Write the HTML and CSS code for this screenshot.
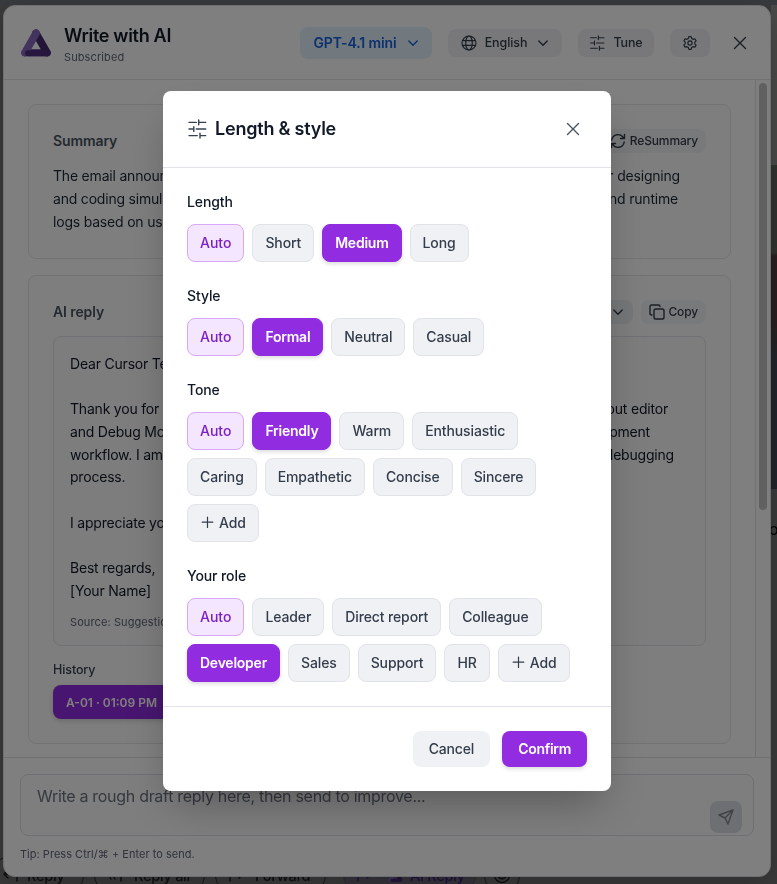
FILE: index.html
```html
<!DOCTYPE html>
<html lang="en">

<head>
    <meta charset="UTF-8">
    <meta name="viewport" content="width=device-width, initial-scale=1.0">
    <title>Write with AI</title>
    <link rel="stylesheet" href="styles.css">
</head>

<body>
    <svg width="0" height="0" class="sprite">
        <symbol id="icon-tune" viewBox="0 0 20 20">
            <path d="M2 3.400h7.300M11.700 3.400h7M11.700 1v4.800M2 10h4.800M9.300 10h9.400M6.800 7.600v4.800M2 16.600h8.300M13 16.600h5.700M13 14.200v4.800" />
        </symbol>
        <symbol id="icon-close" viewBox="0 0 14 14">
            <path d="M1.500 1.500l11 11M12.500 1.500l-11 11" />
        </symbol>
        <symbol id="icon-down" viewBox="0 0 12 12">
            <path d="M1.800 4L6 8.200 10.200 4" />
        </symbol>
        <symbol id="icon-plus" viewBox="0 0 14 14">
            <path d="M7.500 2v10.500M2.200 7.200h10.600" />
        </symbol>
        <symbol id="icon-logo" viewBox="0 0 30 28">
            <path d="M4 23.800h22" stroke="#54308c" stroke-width="7" />
            <path d="M15 4.300l11 19.300" stroke="#452a6c" stroke-width="7.600" />
            <path d="M15 4.300L4 23.600" stroke="#8468bc" stroke-width="7.600" />
            <path d="M7 24.300h19" stroke="#4c2e7c" stroke-width="6" />
        </symbol>
    </svg>

    <!-- mail page behind -->
    <div class="mail">
        <div class="mail-side">
            <div class="side-top"></div>
            <div class="side-photo"></div>
            <div class="side-text">o</div>
        </div>
        <div class="mail-actions">
            <div class="pill reply"><svg class="ic" width="16" height="14" viewBox="0 0 16 14"><path d="M5 2L1 6l4 4M1 6h10q3 0 3 4v3" /></svg>Reply</div>
            <div class="pill reply-all"><svg class="ic" width="16" height="14" viewBox="0 0 16 14"><path d="M4 2L1 6l3 5M8 2L5 6l3 5M5 6h6q3 0 3 4v3" /></svg>Reply all</div>
            <div class="pill forward"><svg class="ic" width="16" height="14" viewBox="0 0 16 14"><path d="M11 2l4 4-4 4M15 6H5Q2 6 2 10v3" /></svg>Forward</div>
            <div class="pill ai"><svg class="ic" width="16" height="14" viewBox="0 0 16 14"><path d="M11 2l4 4-4 4M15 6H5Q2 6 2 10v3" /></svg><svg class="logo" width="15" height="13"><use href="#icon-logo" /></svg>AI Reply</div>
            <div class="pill smile"><svg class="ic" width="18" height="18" viewBox="0 0 18 18"><circle cx="9" cy="9" r="7.500" /><path d="M5 10.500q4 5 8 0zM6 6.500v1M12 6.500v1" /></svg></div>
        </div>
    </div>

    <div class="panel">
        <div class="panel-header">
            <svg class="logo" width="30" height="28"><use href="#icon-logo" /></svg>
            <div class="panel-title">
                <h1>Write with AI</h1>
                <p>Subscribed</p>
            </div>
            <div class="toolbar">
                <button class="tool model">GPT-4.1 mini <svg class="ic" width="12" height="12"><use href="#icon-down" /></svg></button>
                <button class="tool lang">
                    <svg class="ic thin" width="16" height="16" viewBox="0 0 16 16"><circle cx="8" cy="8" r="7" /><ellipse cx="8" cy="8" rx="3.300" ry="7" /><path d="M1.500 5.700h13M1.500 10.300h13" /></svg>
                    English
                    <svg class="ic arrow" width="12" height="12"><use href="#icon-down" /></svg>
                </button>
                <button class="tool tune"><svg class="ic" width="16" height="16"><use href="#icon-tune" /></svg>Tune</button>
                <button class="tool gear">
                    <svg class="ic" width="16" height="16" viewBox="0 0 24 24"><circle cx="12" cy="12" r="3.200" /><path d="M9.600 5.200L10.300 2.500h3.400l.7 2.700 2.200 1.300 2.700-.8 1.900 3.100-2 1.900v2.600l2 1.900-1.900 3.100-2.700-.8-2.200 1.300-.7 2.700h-3.400l-.7-2.700-2.200-1.300-2.700.8-1.900-3.100 2-1.900v-2.600l-2-1.900 1.900-3.100 2.700.8z" /></svg>
                </button>
                <button class="close"><svg class="ic" width="14" height="14"><use href="#icon-close" /></svg></button>
            </div>
        </div>

        <div class="panel-body">
            <div class="content">
                <div class="card">
                    <div class="card-head">
                        <h2>Summary</h2>
                        <button class="small">
                            <svg class="ic" width="16" height="16" viewBox="0 0 16 16"><path d="M1.800 7A6.300 6.300 0 0 1 13.500 4.800M14.500 1.500v4h-4M14.200 9A6.300 6.300 0 0 1 2.500 11.200M1.500 14.500v-4h4" /></svg>
                            ReSummary
                        </button>
                    </div>
                    <div class="text">
                        <p class="s1"><span>The email announces</span><span>for designing</span></p>
                        <p class="s2"><span>and coding simulators</span><span>and runtime</span></p>
                        <p>logs based on user</p>
                    </div>
                </div>

                <div class="card">
                    <div class="card-head">
                        <h2>AI reply</h2>
                        <div class="head-buttons">
                            <button class="small translate">Translate <svg class="ic" width="12" height="12"><use href="#icon-down" /></svg></button>
                            <button class="small copy">
                                <svg class="ic" width="16" height="16" viewBox="0 0 16 16"><rect x="5" y="5" width="10" height="10" rx="1.800" /><path d="M3 11H2.500Q1 11 1 9.500v-7Q1 1 2.500 1h7Q11 1 11 2.500" /></svg>
                                Copy
                            </button>
                        </div>
                    </div>
                    <div class="reply-box">
                        <div class="text">
                            <p>Dear Cursor Team,</p>
                            <p></p>
                            <p class="r1"><span>Thank you for</span><span>layout editor</span></p>
                            <p class="r2"><span>and Debug Mode</span><span>development</span></p>
                            <p class="r3"><span>workflow. I am</span><span>debugging</span></p>
                            <p>process.</p>
                            <p></p>
                            <p>I appreciate your</p>
                            <p></p>
                            <p>Best regards,</p>
                            <p>[Your Name]</p>
                        </div>
                        <p class="source">Source: Suggestion</p>
                    </div>
                    <p class="history-label">History</p>
                    <button class="history">A-01 · 01:09 PM</button>
                </div>
            </div>
            <div class="scrollbar">
                <div class="thumb"></div>
            </div>
        </div>

        <div class="panel-footer">
            <div class="draft">
                <textarea placeholder="Write a rough draft reply here, then send to improve..."></textarea>
                <button class="send"><svg class="ic" width="16" height="16" viewBox="0 0 16 16"><path d="M15 1L1 6l6 3 3 6zM15 1L7 9" /></svg></button>
            </div>
            <p class="tip">Tip: Press Ctrl/⌘ + Enter to send.</p>
        </div>
    </div>

    <div class="overlay">
        <div class="modal">
            <div class="modal-header">
                <svg class="ic" width="20" height="20"><use href="#icon-tune" /></svg>
                <h2>Length &amp; style</h2>
                <button class="close"><svg class="ic" width="14" height="14"><use href="#icon-close" /></svg></button>
            </div>

            <div class="modal-body">
                <div class="group">
                    <h3>Length</h3>
                    <div class="chips">
                        <button class="chip auto">Auto</button>
                        <button class="chip">Short</button>
                        <button class="chip active">Medium</button>
                        <button class="chip">Long</button>
                    </div>
                </div>
                <div class="group">
                    <h3>Style</h3>
                    <div class="chips">
                        <button class="chip auto">Auto</button>
                        <button class="chip active">Formal</button>
                        <button class="chip">Neutral</button>
                        <button class="chip">Casual</button>
                    </div>
                </div>
                <div class="group">
                    <h3>Tone</h3>
                    <div class="chips">
                        <button class="chip auto">Auto</button>
                        <button class="chip active">Friendly</button>
                        <button class="chip">Warm</button>
                        <button class="chip">Enthusiastic</button>
                        <button class="chip">Caring</button>
                        <button class="chip">Empathetic</button>
                        <button class="chip">Concise</button>
                        <button class="chip">Sincere</button>
                        <button class="chip add"><svg class="ic" width="14" height="14"><use href="#icon-plus" /></svg>Add</button>
                    </div>
                </div>
                <div class="group">
                    <h3>Your role</h3>
                    <div class="chips">
                        <button class="chip auto">Auto</button>
                        <button class="chip">Leader</button>
                        <button class="chip">Direct report</button>
                        <button class="chip">Colleague</button>
                        <button class="chip active">Developer</button>
                        <button class="chip">Sales</button>
                        <button class="chip">Support</button>
                        <button class="chip">HR</button>
                        <button class="chip add"><svg class="ic" width="14" height="14"><use href="#icon-plus" /></svg>Add</button>
                    </div>
                </div>
            </div>

            <div class="modal-footer">
                <button class="cancel">Cancel</button>
                <button class="confirm">Confirm</button>
            </div>
        </div>
    </div>
</body>

</html>
```

FILE: styles.css
```css
* {
    box-sizing: border-box;
    margin: 0;
    padding: 0;
}

body {
    height: 884px;
    overflow: hidden;
    font-family: Inter, "Liberation Sans", "DejaVu Sans", sans-serif;
    font-size: 14px;
    color: #111827;
    background-color: #757575;
}

button,
textarea {
    font-family: inherit;
    border: none;
}

button {
    display: flex;
    align-items: center;
    justify-content: center;
    font-weight: 500;
    font-size: 14px;
    color: #333d4b;
    white-space: nowrap;
    cursor: pointer;
}

.sprite {
    position: absolute;
}

.ic {
    flex-shrink: 0;
    fill: none;
    stroke: currentColor;
    stroke-width: 1.4;
    stroke-linecap: round;
    stroke-linejoin: round;
}

.thin {
    stroke-width: 1.2;
}

.logo {
    flex-shrink: 0;
    fill: none;
    stroke-linecap: round;
}

/* mail page */
.mail {
    position: fixed;
    inset: 0;
    display: flex;
    flex-direction: column;
    justify-content: space-between;
    border-top: 5px solid #72747a;
}

.mail-side {
    width: 6px;
    margin-left: auto;
    flex: none;
    height: 680px;
    overflow: hidden;
}

.side-top {
    height: 160px;
    background-color: #93938f;
}

.side-photo {
    height: 324px;
    background: linear-gradient(#62665c 0 27%, #4c4240 28% 50%, #454a50 60% 100%);
}

.side-text {
    padding-top: 30px;
    margin-left: -2px;
    font-size: 16px;
    line-height: 20px;
    color: #000;
}

.mail-actions {
    display: flex;
    gap: 10px;
    height: 27px;
    margin-left: -10px;
}

.pill {
    flex: none;
    display: flex;
    align-items: center;
    height: 36px;
    padding-left: 12px;
    gap: 11px;
    border: 1px solid #303030;
    border-radius: 18px;
    font-size: 14.5px;
    font-weight: 500;
    letter-spacing: -0.25px;
    color: #1c1c1c;
}

.reply {
    width: 94px;
    gap: 8px;
}

.reply-all {
    width: 111px;
}

.forward {
    width: 111px;
}

.ai {
    width: 133px;
    gap: 7px;
    margin-left: 7px;
    color: #3d207a;
    border-color: #5c5273;
    background-color: #6d6878;
}

.ai .logo {
    margin-left: 9px;
}

.smile {
    width: 36px;
    padding-left: 8px;
    margin-left: -2px;
}

/* panel */
.panel {
    position: fixed;
    top: 5px;
    left: 3px;
    width: 768px;
    height: 872px;
    display: flex;
    flex-direction: column;
    overflow: hidden;
    background-color: #fff;
    border: 1px solid #dcdee4;
    border-radius: 12px;
    box-shadow: 0 10px 30px rgba(0, 0, 0, 0.2);
}

.panel-header {
    flex: none;
    display: flex;
    align-items: center;
    height: 74px;
    padding: 0 16px 0 17px;
    border-bottom: 1px solid #e1e3e7;
}

.panel-title {
    padding-top: 3px;
    margin-left: 13px;
}

.panel-title h1 {
    font-size: 18px;
    font-weight: 600;
    line-height: 24px;
    letter-spacing: -0.3px;
}

.panel-title p {
    margin-top: 1px;
    font-size: 11px;
    line-height: 16px;
    letter-spacing: 0.1px;
    color: #5f6775;
}

.toolbar {
    display: flex;
    align-items: center;
    gap: 16px;
    margin-left: auto;
}

.tool {
    height: 28px;
    border-radius: 8px;
    font-size: 12.5px;
    letter-spacing: -0.1px;
    background-color: #f0f1f4;
}

.model {
    width: 132px;
    height: 32px;
    gap: 10px;
    font-size: 14px;
    font-weight: 600;
    letter-spacing: -0.12px;
    color: #1662dc;
    background-color: #e3f1fd;
}

.lang {
    width: 114px;
    gap: 8px;
}

.lang .arrow {
    margin-left: 2px;
}

.tune {
    width: 76px;
    gap: 8px;
}

.gear {
    width: 40px;
}

.gear .ic {
    stroke-width: 1.7;
}

.close {
    width: 28px;
    height: 28px;
    background: none;
}

.panel-body {
    flex: 1;
    display: flex;
    min-height: 0;
}

.content {
    flex: 1;
    display: flex;
    flex-direction: column;
    gap: 16px;
    padding: 24px;
    overflow: hidden;
}

.scrollbar {
    width: 15px;
    padding: 3px 3px;
    border-left: 1px solid #e1e3e7;
    background-color: #fcfcfc;
}

.thumb {
    width: 8px;
    height: 427px;
    border-radius: 4px;
    background-color: #c1c1c1;
}

.card {
    flex: none;
    padding: 24px;
    background-color: #fcfcfd;
    border: 1px solid #e5e7eb;
    border-radius: 8px;
}

.card:first-child {
    height: 155px;
}

.card-head {
    display: flex;
    align-items: center;
    justify-content: space-between;
    height: 24px;
    margin-bottom: 12px;
}

.card-head h2 {
    padding-bottom: 1px;
    font-size: 14px;
    font-weight: 600;
    letter-spacing: -0.1px;
    color: #4b5563;
}

.head-buttons {
    display: flex;
    gap: 8px;
}

.small {
    height: 24px;
    padding: 0 8px 1px;
    gap: 4px;
    border-radius: 8px;
    font-size: 12px;
    letter-spacing: -0.15px;
    background-color: #f1f3f6;
}

.translate {
    gap: 8px;
    padding-right: 9px;
    background-color: #eceef2;
}

.copy {
    gap: 3px;
}

.text p {
    display: flex;
    justify-content: space-between;
    height: 22.75px;
    line-height: 22.75px;
    letter-spacing: -0.2px;
    color: #1f2937;
}

.text .s1 {
    width: 627px;
}

.text .s2 {
    width: 625px;
}

.text .r1 {
    width: 598px;
}

.text .r2 {
    width: 580px;
}

.text .r3 {
    width: 604px;
}

.reply-box {
    padding: 15.6px 16px 15px;
    background-color: #fafafb;
    border: 1px solid #e1e3e8;
    border-radius: 8px;
}

.reply-box .text p {
    color: #111827;
}

.source {
    margin-top: 11.4px;
    font-size: 11px;
    line-height: 16px;
    letter-spacing: 0.1px;
    color: #5f6775;
}

.history-label {
    margin: 16px 0 7px;
    font-size: 12.5px;
    font-weight: 500;
    line-height: 16px;
    letter-spacing: -0.1px;
    color: #374151;
}

.history {
    width: 140px;
    height: 34px;
    padding-left: 13px;
    justify-content: flex-start;
    border-radius: 8px;
    font-size: 12px;
    font-weight: 600;
    color: #fff;
    background-color: #912ce0;
    box-shadow: 0 2px 5px rgba(0, 0, 0, 0.15);
}

.panel-footer {
    flex: none;
    padding: 16px;
    height: 119px;
    border-top: 1px solid #e1e3e7;
}

.draft {
    position: relative;
    height: 62px;
}

.draft textarea {
    display: block;
    width: 734px;
    height: 62px;
    padding: 9px 16px;
    resize: none;
    overflow: hidden;
    font-size: 16px;
    line-height: 24px;
    letter-spacing: -0.3px;
    background-color: #fcfcfd;
    border: 1px solid #dfe1e8;
    border-radius: 8px;
}

.draft textarea::placeholder {
    color: #6b7280;
}

.send {
    position: absolute;
    top: 27px;
    right: 12px;
    width: 32px;
    height: 32px;
    border-radius: 8px;
    color: #82868f;
    background-color: #dcdee4;
}

.tip {
    margin-top: 10px;
    font-size: 11px;
    line-height: 16px;
    letter-spacing: 0.02px;
    color: #5f6775;
}

/* modal */
.overlay {
    position: fixed;
    inset: 0;
    background-color: rgba(0, 0, 0, 0.5);
}

.modal {
    width: 448px;
    height: 700px;
    margin: 91px 0 0 163px;
    background-color: #fff;
    border-radius: 8px;
    box-shadow: 0 20px 40px -10px rgba(0, 0, 0, 0.3);
}

.modal-header {
    display: flex;
    align-items: center;
    height: 77px;
    padding: 0 24px;
    border-bottom: 1px solid #e1e3e7;
    color: #374151;
}

.modal-header h2 {
    padding-bottom: 2px;
    margin-left: 8px;
    font-size: 18px;
    font-weight: 600;
    letter-spacing: -0.22px;
    color: #111827;
}

.modal-header .close {
    margin-left: auto;
    color: #4b5563;
}

.modal-body {
    display: flex;
    flex-direction: column;
    gap: 24px;
    padding: 24px;
}

.group h3 {
    margin-bottom: 12px;
    font-size: 14px;
    font-weight: 500;
    line-height: 20px;
    letter-spacing: -0.1px;
}

.chips {
    display: flex;
    flex-wrap: wrap;
    gap: 8px;
}

.chip {
    height: 38px;
    padding: 0 12px 2px;
    border: 1px solid #e1e3e8;
    border-radius: 8px;
    letter-spacing: -0.12px;
    background-color: #f0f1f4;
}

.chip.auto {
    letter-spacing: 0;
    color: #7a1fc6;
    border-color: #d8a9f8;
    background-color: #f3e6fe;
}

.chip.active {
    font-weight: 600;
    letter-spacing: -0.24px;
    color: #fff;
    border-color: #912ce0;
    background-color: #912ce0;
    box-shadow: 0 2px 4px rgba(0, 0, 0, 0.14);
}

.chip.add {
    gap: 5px;
}

.add .ic {
    stroke-width: 1.2;
}

.modal-footer {
    display: flex;
    justify-content: flex-end;
    gap: 12px;
    padding: 24px;
    border-top: 1px solid #e1e3ea;
}

.cancel,
.confirm {
    height: 36px;
    padding: 0 16px 2px;
    border-radius: 8px;
    letter-spacing: -0.15px;
    background-color: #f0f1f4;
}

.confirm {
    font-weight: 600;
    letter-spacing: -0.3px;
    color: #fff;
    background-color: #912ce0;
    box-shadow: 0 2px 4px rgba(0, 0, 0, 0.14);
}
```
